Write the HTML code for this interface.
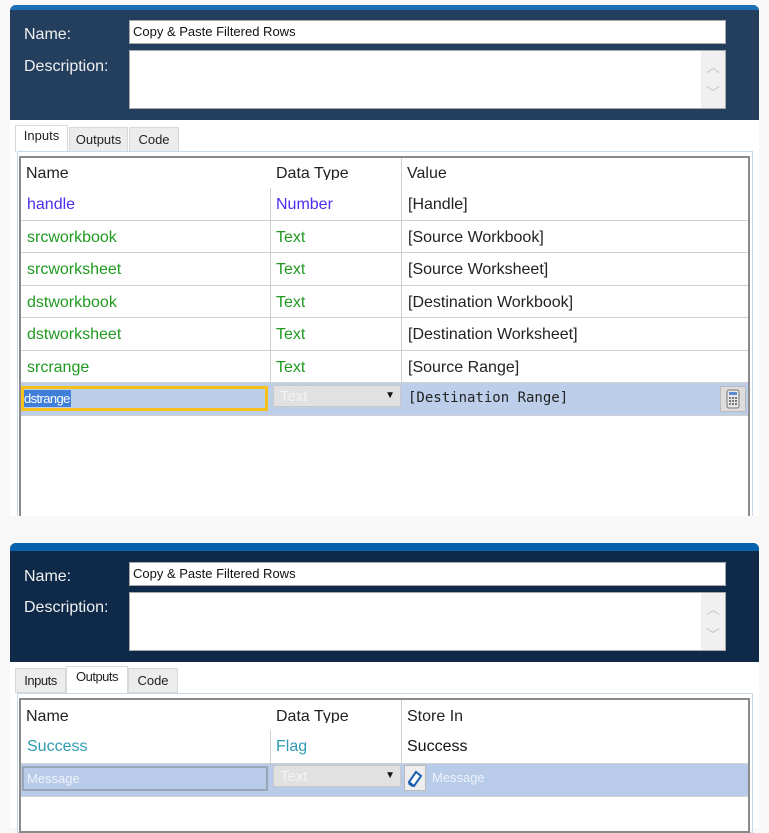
<!DOCTYPE html>
<html><head><meta charset="utf-8"><style>
*{margin:0;padding:0;box-sizing:border-box}
body{width:769px;height:828px;background:#f8f8f8;position:relative;overflow:hidden;font-family:"Liberation Sans",sans-serif}
.a{position:absolute}
.panel{position:absolute;left:10px;width:749px;border-radius:6px 6px 0 0;overflow:hidden}
.lbl{position:absolute;color:#f0f0f0;font-size:16px}
.inp{position:absolute;left:119px;width:597px;background:#fff;border:1px solid #a8a8a8;font-size:13px;color:#111;padding-left:3px}
.sb{position:absolute;right:0;top:0;bottom:0;width:24px;background:#f0f0f0;color:#c4c4c4;font-size:14px;text-align:center}
.tab{position:absolute;height:25px;background:#ececec;border:1px solid #d8d8d8;font-size:13px;color:#222;padding:4px 0 0 0;text-align:center}
.tab.on{background:#fff;border-bottom:none;padding-top:2px}
.cell{position:absolute;font-size:16px;white-space:nowrap;overflow:hidden}
.hd{height:17px;line-height:22px}
.hl{position:absolute;height:1px;background:#d0d0d0}
.vl{position:absolute;width:1px;background:#d0d0d0}
</style></head><body>
<div class="a" style="left:10px;top:120px;width:749px;height:396px;background:#fff"></div>
<div class="panel" style="top:5px;height:115px;background:#243f5d">
 <div class="a" style="left:0;top:0;width:749px;height:5px;background:#1c6fb5"></div>
 <div class="lbl" style="left:14px;top:21px">Name:</div>
 <div class="lbl" style="left:14px;top:53px">Description:</div>
 <div class="inp" style="top:15px;height:24px;line-height:22px">Copy &amp; Paste Filtered Rows</div>
 <div class="inp" style="top:45px;height:59px"><div class="sb"><div style="margin-top:6px">︿</div><div style="margin-top:6px">﹀</div></div></div>
</div>
<div class="tab on" style="left:15px;top:125px;width:53px;height:27px">Inputs</div>
<div class="tab" style="left:69px;top:127px;width:59px">Outputs</div>
<div class="tab" style="left:129px;top:127px;width:50px">Code</div>
<div class="a" style="left:17px;top:151px;width:736px;height:365px;border:1px solid #c9d9ec;border-bottom:none"></div>
<div class="a" style="left:19px;top:156px;width:731px;height:360px;border:2px solid #8a8a8a;border-bottom:none;background:#fff"></div>
<div class="vl" style="left:270px;top:188px;height:228px"></div>
<div class="vl" style="left:401px;top:158px;height:258px"></div>
<div class="cell hd" style="left:26px;top:163px;color:#222">Name</div>
<div class="cell hd" style="left:276px;top:163px;color:#222">Data Type</div>
<div class="cell hd" style="left:407px;top:163px;color:#222">Value</div>
<div class="hl" style="left:21px;top:220px;width:727px"></div>
<div class="hl" style="left:21px;top:252px;width:727px"></div>
<div class="hl" style="left:21px;top:285px;width:727px"></div>
<div class="hl" style="left:21px;top:317px;width:727px"></div>
<div class="hl" style="left:21px;top:350px;width:727px"></div>
<div class="hl" style="left:21px;top:382px;width:727px"></div>
<div class="hl" style="left:21px;top:415px;width:727px"></div>
<div class="cell" style="left:27px;top:196px;color:#4b2ef0">handle</div>
<div class="cell" style="left:276px;top:196px;color:#4b2ef0">Number</div>
<div class="cell" style="left:408px;top:196px;color:#222">[Handle]</div>
<div class="cell" style="left:27px;top:229px;color:#1f9a1f">srcworkbook</div>
<div class="cell" style="left:276px;top:229px;color:#1f9a1f">Text</div>
<div class="cell" style="left:408px;top:229px;color:#222">[Source Workbook]</div>
<div class="cell" style="left:27px;top:261px;color:#1f9a1f">srcworksheet</div>
<div class="cell" style="left:276px;top:261px;color:#1f9a1f">Text</div>
<div class="cell" style="left:408px;top:261px;color:#222">[Source Worksheet]</div>
<div class="cell" style="left:27px;top:294px;color:#1f9a1f">dstworkbook</div>
<div class="cell" style="left:276px;top:294px;color:#1f9a1f">Text</div>
<div class="cell" style="left:408px;top:294px;color:#222">[Destination Workbook]</div>
<div class="cell" style="left:27px;top:326px;color:#1f9a1f">dstworksheet</div>
<div class="cell" style="left:276px;top:326px;color:#1f9a1f">Text</div>
<div class="cell" style="left:408px;top:326px;color:#222">[Destination Worksheet]</div>
<div class="cell" style="left:27px;top:359px;color:#1f9a1f">srcrange</div>
<div class="cell" style="left:276px;top:359px;color:#1f9a1f">Text</div>
<div class="cell" style="left:408px;top:359px;color:#222">[Source Range]</div>
<div class="a" style="left:21px;top:383px;width:727px;height:32px;background:#bccee9"></div>
<div class="a" style="left:21px;top:386px;width:247px;height:25px;border:3px solid #f5c01a;background:#bccee9"></div>
<div class="a" style="left:24px;top:390px;height:17px;background:#3f7fd8;color:#fff;font-size:13px;line-height:17px;letter-spacing:-0.6px;padding-right:1px">dstrange</div>
<div class="a" style="left:273px;top:385px;width:128px;height:22px;background:#e1e1e1;border:1px solid #c8c8c8;color:#f4f4f4;font-size:15px;padding-left:6px;line-height:22px">Text<span style="position:absolute;right:5px;top:0;line-height:20px;color:#111;font-size:10px">▼</span></div>
<div class="a" style="left:408px;top:390px;font-family:'DejaVu Sans Mono','Liberation Mono',monospace;font-size:14px;color:#222">[Destination Range]</div>
<div class="a" style="left:720px;top:386px;width:26px;height:26px;background:#ddd;border:1px solid #bbb">
<svg width="24" height="24" viewBox="0 0 24 24"><rect x="6" y="3" width="12" height="18" rx="2" fill="#e8e8e8" stroke="#777"/><rect x="8" y="5" width="8" height="3" fill="#5a8ad0"/><g fill="#777"><rect x="8" y="10" width="2" height="2"/><rect x="11" y="10" width="2" height="2"/><rect x="14" y="10" width="2" height="2"/><rect x="8" y="13" width="2" height="2"/><rect x="11" y="13" width="2" height="2"/><rect x="14" y="13" width="2" height="2"/><rect x="8" y="16" width="2" height="2"/><rect x="11" y="16" width="2" height="2"/><rect x="14" y="16" width="2" height="2"/></g></svg></div>

<div class="a" style="left:10px;top:662px;width:749px;height:166px;background:#fff"></div>
<div class="panel" style="top:543px;height:119px;background:#0f2a48">
 <div class="a" style="left:0;top:0;width:749px;height:8px;background:#0662ac"></div>
 <div class="lbl" style="left:14px;top:25px">Name:</div>
 <div class="lbl" style="left:14px;top:56px">Description:</div>
 <div class="inp" style="top:19px;height:24px;line-height:22px">Copy &amp; Paste Filtered Rows</div>
 <div class="inp" style="top:49px;height:59px"><div class="sb"><div style="margin-top:6px">︿</div><div style="margin-top:6px">﹀</div></div></div>
</div>
<div class="tab" style="left:15px;top:668px;width:51px;letter-spacing:-0.5px">Inputs</div>
<div class="tab on" style="left:66px;top:666px;width:62px;height:28px;letter-spacing:-0.5px">Outputs</div>
<div class="tab" style="left:128px;top:668px;width:50px">Code</div>
<div class="a" style="left:17px;top:693px;width:736px;height:140px;border:1px solid #c9d9ec"></div>
<div class="a" style="left:19px;top:698px;width:731px;height:135px;border:2px solid #8a8a8a;background:#fff"></div>
<div class="vl" style="left:270px;top:730px;height:66px"></div>
<div class="vl" style="left:401px;top:700px;height:96px"></div>
<div class="cell hd" style="left:26px;top:706px;color:#222">Name</div>
<div class="cell hd" style="left:276px;top:706px;color:#222">Data Type</div>
<div class="cell hd" style="left:407px;top:706px;color:#222">Store In</div>
<div class="cell" style="left:27px;top:738px;color:#2e9ab0">Success</div>
<div class="cell" style="left:276px;top:738px;color:#2e9ab0">Flag</div>
<div class="cell" style="left:407px;top:738px;color:#111">Success</div>
<div class="hl" style="left:21px;top:763px;width:727px"></div>
<div class="a" style="left:21px;top:764px;width:727px;height:32px;background:#b8cbe9"></div>
<div class="hl" style="left:21px;top:796px;width:727px"></div>
<div class="a" style="left:22px;top:766px;width:246px;height:25px;border:2px solid #9aa6b6;background:#b8cbe9;color:#eef2fa;font-size:13px;padding-left:3px;line-height:21px">Message</div>
<div class="a" style="left:273px;top:765px;width:128px;height:22px;background:#e1e1e1;border:1px solid #c8c8c8;color:#f4f4f4;font-size:15px;padding-left:6px;line-height:22px">Text<span style="position:absolute;right:5px;top:0;line-height:20px;color:#111;font-size:10px">▼</span></div>
<div class="a" style="left:404px;top:765px;width:22px;height:26px;background:#eee;border:1px solid #bbb">
<svg width="20" height="24" viewBox="0 0 20 24"><path d="M4 16 L11 6 L16 10 L9 20 Z" fill="#fff" stroke="#1d5fb0" stroke-width="2"/><path d="M4 16 L9 20 L7 21 L3 18 Z" fill="#1d5fb0"/></svg></div>
<div class="a" style="left:432px;top:770px;color:#eef2fa;font-size:13px">Message</div>
</body></html>
